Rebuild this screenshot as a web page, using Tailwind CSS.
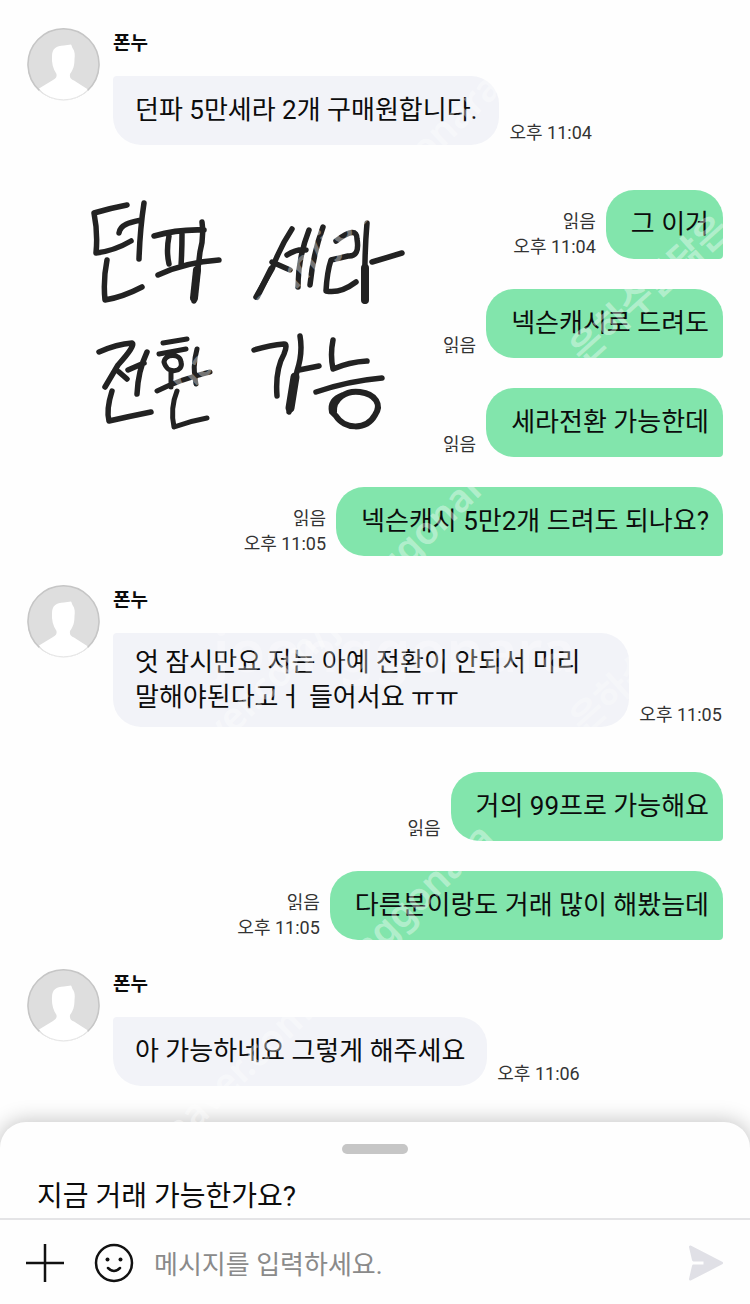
<!DOCTYPE html>
<html lang="ko">
<head>
<meta charset="utf-8">
<meta name="viewport" content="width=device-width, initial-scale=1">
<title>폰누</title>
<script src="https://cdn.jsdelivr.net/npm/@tailwindcss/browser@4"></script>
</head>
<body class="relative flex min-h-screen flex-col overflow-x-hidden bg-[#fefefe] font-[Roboto,'Noto_Sans_CJK_KR',sans-serif] text-[26px] leading-[35px] text-[#0c0c0c]">
<svg class="hidden" aria-hidden="true">
  <symbol id="avatar" viewBox="0 0 73 73">
    <circle cx="36.5" cy="36.5" r="36" fill="#dedede"/>
    <path d="M12 60.500 26 52C29 50 30 49 29.500 46 26 41 24.500 35 25 28 25 21 29 17.500 37 17.500L44 16.500C45 18 45 19 45.500 20 48 23 48 27 47.500 31 47.500 38 46 42 43 46 42.500 50 44 51 47 52.500L61 61.500C54 68.500 45 72.500 36.500 72.500 27 72.500 18 68 12 60.500Z" fill="#fff"/>
    <path d="M12.500 62.500A35.500 35.500 0 1 1 60.500 62.500" fill="none" stroke="#c6c6c6" stroke-width="1.500"/>
    <path d="M12.500 62.500A35.500 35.500 0 0 0 60.500 62.500" fill="none" stroke="#e6e6e6"/>
  </symbol>
</svg>

<main class="flex grow flex-col gap-[29px] pt-7">
  <section class="flex items-start gap-[13px] pl-[27px]">
    <svg class="size-[73px] shrink-0" role="img" aria-label="프로필"><use href="#avatar"/></svg>
    <div class="flex flex-col gap-4">
      <h2 class="text-[19px] leading-8 font-bold">폰누</h2>
      <div class="flex items-end gap-[10px]">
        <p class="flex min-h-[69px] items-center rounded-[28px] rounded-tl-[4px] bg-[#f2f3f8] py-3 pr-[22px] pl-[22px]">던파 5만세라 2개 구매원합니다.</p>
        <time class="shrink-0 text-[18px] leading-[25px] text-[#333]">오후 11:04</time>
      </div>
    </div>
  </section>

  <section class="relative mt-4 flex flex-col items-end gap-[30px] pr-[27px]">
    <svg class="absolute top-0 left-[80px] h-[250px] w-[330px]" viewBox="80 190 330 250" fill="none" stroke="#222" stroke-width="5.500" stroke-linecap="round" stroke-linejoin="round" role="img" aria-label="던파 세라 전환 가능">
      <path d="M127 205Q111 208 94 213Q98 233 96 253Q114 251 131 241M119 233C120 224 132 222 141 220M144 203Q140 229 139 259M107 260Q103 280 105 300Q123 297 142 287"/>
      <path d="M154 236Q178 229 204 230M169 236Q166 251 169 264M182 234Q182 250 181 266M158 275Q186 262 219 260M202 222Q204 238 200 252L194 301"/>
      <path d="M197 270 194 298" stroke-width="8"/>
      <path d="M292 229Q280 247 272 269L256 297M272 262 290 270M287 255Q296 249 306 250M309 230Q298 258 298 287M323 227Q313 254 310 285"/>
      <path d="M271 269 257 297" stroke-width="6"/>
      <path d="M336 241Q357 225 357 239Q360 257 348 256L331 260Q327 272 326 291Q340 294 356 282M367 223Q364 258 365 301M372 262 402 253"/>
      <path d="M365 268V300" stroke-width="8"/>
      <path d="M99 352Q117 344 132 343Q136 345 118 365L105 387M119 372 127 379M128 370 144 363M147 352Q138 371 137 394M112 391Q106 410 109 421Q131 416 151 412"/>
      <path d="M163 343 187 339M159 354 186 349M164 362C165 354 180 353 181 362C184 372 167 375 164 362M171 372V387M157 391Q181 379 210 372M197 349Q192 367 196 384M177 391Q170 408 174 427Q190 421 207 418" stroke-width="5"/>
      <path d="M254 350Q270 345 284 344Q288 344 284 354Q275 370 277 396M300 336Q303 353 297 371L289 412M299 370 319 366M333 340Q330 355 333 369Q349 362 367 361"/>
      <path d="M295 377 290 408" stroke-width="9"/>
      <path d="M316 392Q348 381 382 378"/>
      <path d="M334 412C333 399 346 390 360 392C376 394 382 405 375 415C366 431 344 429 336 416L332 412C330 403 335 398 343 395" stroke-width="6"/>
    </svg>
    <div class="relative flex items-end gap-[10px]">
      <p class="text-right text-[18px] leading-[25px] text-[#333]">읽음<br><time>오후 11:04</time></p>
      <p class="flex min-h-[69px] items-center rounded-[28px] rounded-br-[4px] bg-[#82e5ac] py-3 pr-[14px] pl-[25px]">그 이거</p>
    </div>
    <div class="relative flex items-end gap-[10px]">
      <p class="text-right text-[18px] leading-[25px] text-[#333]">읽음</p>
      <p class="flex min-h-[69px] items-center rounded-[28px] rounded-br-[4px] bg-[#82e5ac] py-3 pr-[14px] pl-[25px]">넥슨캐시로 드려도</p>
    </div>
    <div class="relative flex items-end gap-[10px]">
      <p class="text-right text-[18px] leading-[25px] text-[#333]">읽음</p>
      <p class="flex min-h-[69px] items-center rounded-[28px] rounded-br-[4px] bg-[#82e5ac] py-3 pr-[14px] pl-[25px]">세라전환 가능한데</p>
    </div>
    <div class="relative flex items-end gap-[10px]">
      <p class="text-right text-[18px] leading-[25px] text-[#333]">읽음<br><time>오후 11:05</time></p>
      <p class="flex min-h-[69px] items-center rounded-[28px] rounded-br-[4px] bg-[#82e5ac] py-3 pr-[14px] pl-[25px]">넥슨캐시 5만2개 드려도 되나요?</p>
    </div>
  </section>

  <section class="flex items-start gap-[13px] pl-[27px]">
    <svg class="size-[73px] shrink-0" role="img" aria-label="프로필"><use href="#avatar"/></svg>
    <div class="flex flex-col gap-4">
      <h2 class="text-[19px] leading-8 font-bold">폰누</h2>
      <div class="flex items-end gap-[10px]">
        <p class="flex min-h-[69px] items-center rounded-[28px] rounded-tl-[4px] bg-[#f2f3f8] py-3 pr-[49px] pl-[22px]">엇 잠시만요 저는 아예 전환이 안되서 미리<br>말해야된다고ㅓ 들어서요 ㅠㅠ</p>
        <time class="shrink-0 text-[18px] leading-[25px] text-[#333]">오후 11:05</time>
      </div>
    </div>
  </section>

  <section class="mt-4 flex flex-col items-end gap-[30px] pr-[27px]">
    <div class="flex items-end gap-[10px]">
      <p class="text-right text-[18px] leading-[25px] text-[#333]">읽음</p>
      <p class="flex min-h-[69px] items-center rounded-[28px] rounded-br-[4px] bg-[#82e5ac] py-3 pr-[14px] pl-[25px]">거의 99프로 가능해요</p>
    </div>
    <div class="flex items-end gap-[10px]">
      <p class="text-right text-[18px] leading-[25px] text-[#333]">읽음<br><time>오후 11:05</time></p>
      <p class="flex min-h-[69px] items-center rounded-[28px] rounded-br-[4px] bg-[#82e5ac] py-3 pr-[14px] pl-[25px]">다른분이랑도 거래 많이 해봤늠데</p>
    </div>
  </section>

  <section class="flex items-start gap-[13px] pb-9 pl-[27px]">
    <svg class="size-[73px] shrink-0" role="img" aria-label="프로필"><use href="#avatar"/></svg>
    <div class="flex flex-col gap-4">
      <h2 class="text-[19px] leading-8 font-bold">폰누</h2>
      <div class="flex items-end gap-[10px]">
        <p class="flex min-h-[69px] items-center rounded-[28px] rounded-tl-[4px] bg-[#f2f3f8] py-3 pr-[22px] pl-[22px]">아 가능하네요 그렇게 해주세요</p>
        <time class="shrink-0 text-[18px] leading-[25px] text-[#333]">오후 11:06</time>
      </div>
    </div>
  </section>
</main>

<footer class="flex flex-col rounded-t-[26px] bg-[#fefefe] shadow-[0_0_20px_2px_rgba(0,0,0,0.22)]">
  <div class="flex justify-center pt-[22px]"><span class="h-[10px] w-[66px] rounded-full bg-[#c6c6c6]"></span></div>
  <button type="button" class="px-[37px] pt-[25px] pb-1 text-left text-[28px] leading-[35px]">지금 거래 가능한가요?</button>
  <form class="flex h-[88px] items-center border-t-2 border-[#e4e4e6] px-[25px]">
    <button type="button" aria-label="첨부" class="shrink-0">
      <svg class="size-10" viewBox="0 0 40 40" fill="none" stroke="#111" stroke-width="2.500"><path d="M1 20H39M20 1V39"/></svg>
    </button>
    <button type="button" aria-label="이모티콘" class="ml-7 shrink-0">
      <svg class="size-[42px]" viewBox="0 0 42 42" fill="none" stroke="#111" stroke-width="2.500" stroke-linecap="round"><circle cx="21" cy="21" r="18"/><circle cx="14.500" cy="17.500" r="2" fill="#111" stroke="none"/><circle cx="27.500" cy="17.500" r="2" fill="#111" stroke="none"/><path d="M15 26Q21 32 27 26" stroke-width="2.500"/></svg>
    </button>
    <input type="text" aria-label="메시지" placeholder="메시지를 입력하세요." class="ml-[19px] min-w-0 grow bg-transparent pt-1 text-[26px] leading-[35px] outline-none placeholder:text-[#8a8a8a]">
    <button type="submit" aria-label="전송" class="shrink-0">
      <svg class="size-[38px]" viewBox="0 0 38 38" fill="#e0e0e6" stroke="#e0e0e6" stroke-width="3" stroke-linejoin="round"><path d="M3.500 3 34.500 19 3.500 35 6.500 22H18V16H6.500Z"/></svg>
    </button>
  </form>
</footer>

<svg class="pointer-events-none absolute top-0 left-0 h-[1304px] w-[750px]" viewBox="0 0 750 1304" fill="#fff" fill-opacity="0.4" font-family="'Noto Sans', 'Noto Sans CJK KR', sans-serif" font-size="38" font-weight="600" aria-hidden="true">
  <g text-anchor="end">
    <text transform="translate(503 90) rotate(-44)">naver.com/joonggonara</text>
    <text transform="translate(503 474) rotate(-44)">naver.com/joonggonara</text>
    <text transform="translate(496 840) rotate(-44)">naver.com/joonggonara</text>
  </g>
  <g font-size="36">
    <text transform="translate(584 365) rotate(-42)">은하수를닮은</text>
    <text transform="translate(584 735) rotate(-42)" fill-opacity="0.3">은하수</text>
  </g>
  <text x="213" y="672" font-size="58" fill-opacity="0.3">joonggonara</text>
</svg>
</body>
</html>
